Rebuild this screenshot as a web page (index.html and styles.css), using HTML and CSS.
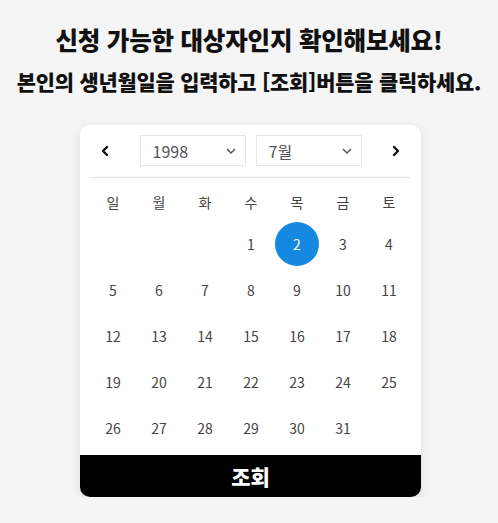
FILE: index.html
```html
<!DOCTYPE html>
<html lang="ko">
<head>
<meta charset="utf-8">
<link rel="stylesheet" href="styles.css">
</head>
<body>
<div class="page">
  <h1 class="title">신청 가능한 대상자인지 확인해보세요!</h1>
  <p class="subtitle">본인의 생년월일을 입력하고 [조회]버튼을 클릭하세요.</p>
  <div class="card">
    <div class="cal">
      <div class="head">
        <button class="nav" aria-label="이전">
          <svg width="10" height="12" viewBox="0 0 10 12"><path d="M7 2 L3 6 L7 10" fill="none" stroke="#111" stroke-width="2.4" stroke-linecap="round" stroke-linejoin="round"/></svg>
        </button>
        <div class="selects">
          <div class="select"><span>1998</span><svg width="12" height="8" viewBox="0 0 12 8"><path d="M2 2 L6 6 L10 2" fill="none" stroke="#555" stroke-width="1.5"/></svg></div>
          <div class="select"><span>7월</span><svg width="12" height="8" viewBox="0 0 12 8"><path d="M2 2 L6 6 L10 2" fill="none" stroke="#555" stroke-width="1.5"/></svg></div>
        </div>
        <button class="nav" aria-label="다음">
          <svg width="10" height="12" viewBox="0 0 10 12"><path d="M3 2 L7 6 L3 10" fill="none" stroke="#111" stroke-width="2.4" stroke-linecap="round" stroke-linejoin="round"/></svg>
        </button>
      </div>
      <div class="divider"></div>
      <div class="weekdays">
        <span>일</span><span>월</span><span>화</span><span>수</span><span>목</span><span>금</span><span>토</span>
      </div>
      <div class="days">
        <span></span><span></span><span></span>
        <span>1</span><span class="sel">2</span><span>3</span><span>4</span>
        <span>5</span><span>6</span><span>7</span><span>8</span><span>9</span><span>10</span><span>11</span>
        <span>12</span><span>13</span><span>14</span><span>15</span><span>16</span><span>17</span><span>18</span>
        <span>19</span><span>20</span><span>21</span><span>22</span><span>23</span><span>24</span><span>25</span>
        <span>26</span><span>27</span><span>28</span><span>29</span><span>30</span><span>31</span><span></span>
      </div>
    </div>
    <button class="submit">조회</button>
  </div>
</div>
</body>
</html>
```
FILE: styles.css
```css
* { box-sizing: border-box; }
html, body {
  margin: 0;
  padding: 0;
  background: #f5f5f5;
}
body {
  font-family: "Noto Sans CJK KR", "Noto Sans", sans-serif;
  color: #444;
}
.page {
  width: 498px;
  padding-top: 22px;
  display: flex;
  flex-direction: column;
  align-items: center;
}
.title {
  margin: 0;
  font-size: 24.5px;
  line-height: 36px;
  font-weight: 900;
  color: #111;
  letter-spacing: -0.2px;
  white-space: nowrap;
}
.subtitle {
  margin: 5px 0 0;
  font-size: 20.9px;
  line-height: 36px;
  font-weight: 900;
  color: #111;
  letter-spacing: -0.2px;
  white-space: nowrap;
}
.card {
  margin-top: 26px;
  margin-left: 3px;
  width: 341px;
  background: #fff;
  border-radius: 10px;
  box-shadow: 0 3px 12px rgba(0, 0, 0, 0.10);
  overflow: hidden;
}
.cal {
  padding: 10px 10px 4px;
}
.head {
  display: flex;
  justify-content: space-between;
  align-items: center;
  height: 31px;
}
.nav {
  width: 30px;
  height: 31px;
  border: 0;
  background: none;
  padding: 0;
  display: flex;
  align-items: center;
  justify-content: center;
}
.selects {
  display: flex;
  gap: 10px;
}
.select {
  width: 106px;
  height: 31px;
  border: 1px solid #e6e6e6;
  display: flex;
  align-items: center;
  justify-content: space-between;
  padding: 0 8px 0 12px;
  font-size: 16px;
  color: #555;
}
.divider {
  margin-top: 11px;
  height: 1px;
  background: #e2e2e2;
}
.weekdays, .days {
  display: grid;
  grid-template-columns: repeat(7, 46px);
}
.weekdays {
  margin-top: 4px;
}
.weekdays span {
  height: 39px;
  display: flex;
  align-items: center;
  justify-content: center;
  font-size: 14px;
  color: #444;
}
.days span {
  height: 46px;
  display: flex;
  align-items: center;
  justify-content: center;
  font-size: 14px;
  color: #444;
}
.days .sel {
  width: 44px;
  height: 44px;
  margin: 1px;
  border-radius: 50%;
  background: #1589e0;
  color: #fff;
}
.submit {
  display: block;
  width: 100%;
  height: 42px;
  border: 0;
  background: #000;
  color: #fff;
  font-family: "Noto Sans CJK KR", sans-serif;
  font-size: 21px;
  font-weight: 900;
  padding: 0;
}
```
